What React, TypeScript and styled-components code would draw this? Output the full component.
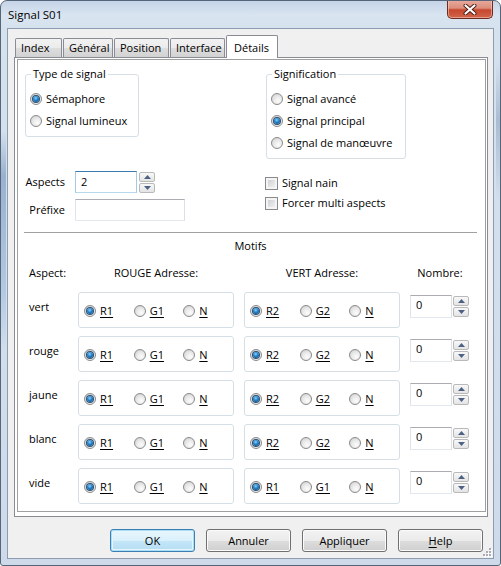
import React from 'react';
import styled, { createGlobalStyle } from 'styled-components';

// Dialog data
const tabs = [
  { label: 'Index', width: 47 },
  { label: 'Général', width: 50 },
  { label: 'Position', width: 55 },
  { label: 'Interface', width: 55 },
  { label: 'Détails', width: 52, active: true },
];

const motifRows = [
  { label: 'vert', rouge: ['R1', 'G1', 'N'], vert: ['R2', 'G2', 'N'] },
  { label: 'rouge', rouge: ['R1', 'G1', 'N'], vert: ['R2', 'G2', 'N'] },
  { label: 'jaune', rouge: ['R1', 'G1', 'N'], vert: ['R2', 'G2', 'N'] },
  { label: 'blanc', rouge: ['R1', 'G1', 'N'], vert: ['R2', 'G2', 'N'] },
  { label: 'vide', rouge: ['R1', 'G1', 'N'], vert: ['R1', 'G1', 'N'] },
];

const GlobalStyle = createGlobalStyle`
  html, body {
    margin: 0;
    padding: 0;
    background: #ffffff;
  }
  body {
    font-family: "Open Sans", "Liberation Sans", sans-serif;
    font-size: 11px;
    color: #000;
  }
  * {
    box-sizing: border-box;
  }
`;

const Window = styled.div`
  width: 501px;
  height: 566px;
  border: 1px solid #56667a;
  border-radius: 7px 7px 3px 3px;
  padding: 0 6px 6px;
  display: flex;
  flex-direction: column;
  overflow: hidden;
  background:
    linear-gradient(180deg, transparent 130px, rgba(80, 120, 170, 0.45) 175px, rgba(120, 160, 205, 0.35) 290px, transparent 350px) left top / 5px 100% no-repeat,
    linear-gradient(180deg, transparent 60px, rgba(90, 120, 160, 0.35) 120px, transparent 200px) right top / 4px 100% no-repeat,
    linear-gradient(180deg, #c5d4e7 0px, #d9e4f1 14px, #d6e1ee 30px, #d2deec 60%, #cedaea 100%);
`;

const TitleBar = styled.div`
  height: 27px;
  display: flex;
  align-items: flex-start;
  justify-content: space-between;
`;

const Title = styled.span`
  margin: 6px 0 0 1px;
  font-size: 11.5px;
  line-height: 15px;
`;

const CloseButton = styled.div`
  width: 46px;
  height: 19px;
  margin: -1px 1px 0 0;
  border: 1px solid #6d2a1e;
  border-top: none;
  border-radius: 0 0 5px 5px;
  background: linear-gradient(180deg, #e9ab9d 0%, #dc8e7c 45%, #c7472d 55%, #d0654b 100%);
  box-shadow: inset 0 0 0 1px rgba(255, 215, 205, 0.5);
  display: flex;
  align-items: center;
  justify-content: center;
`;

const Client = styled.div`
  position: relative;
  flex: 1;
  border: 1px solid #8c9db2;
  background: #f0f0f0;
  padding: 6px 5px 6px 6px;
  display: flex;
  flex-direction: column;
`;

const TabStrip = styled.div`
  position: relative;
  z-index: 1;
  height: 22px;
  padding-left: 1px;
  display: flex;
  align-items: flex-start;
`;

const Tab = styled.div<{ $active?: boolean; $w: number }>`
  width: ${({ $w }) => $w}px;
  height: ${({ $active }) => ($active ? 23 : 19)}px;
  margin-top: ${({ $active }) => ($active ? 0 : 3)}px;
  margin-right: 1px;
  padding: ${({ $active }) => ($active ? '4px 0 0 7px' : '1px 0 0 5px')};
  border: 1px solid #898c95;
  border-bottom: none;
  border-radius: 2px 2px 0 0;
  line-height: 15px;
  white-space: nowrap;
  background: ${({ $active }) =>
    $active ? '#ffffff' : 'linear-gradient(180deg, #f2f2f2 0%, #ebebeb 50%, #dedede 51%, #d2d2d2 100%)'};
`;

const Sheet = styled.div`
  height: 460px;
  border: 1px solid #898c95;
  background: #ffffff;
  padding: 1px 1px 4px 2px;
  display: flex;
`;

const Panel = styled.div`
  flex: 1;
  border: 1px solid #a0a0a0;
  background: #ffffff;
  display: flex;
  flex-direction: column;
`;

const TopArea = styled.div`
  display: flex;
  padding-top: 14px;
`;

const LeftCol = styled.div`
  width: 248px;
  display: flex;
  flex-direction: column;
`;

const RightCol = styled.div`
  display: flex;
  flex-direction: column;
`;

const GroupBox = styled.div<{ $w: number; $ml?: number }>`
  position: relative;
  width: ${({ $w }) => $w}px;
  margin-left: ${({ $ml }) => $ml ?? 0}px;
  border: 1px solid #d5dfe5;
  border-radius: 3px;
  padding: 13px 4px 4px;
`;

const Legend = styled.span`
  position: absolute;
  top: -9px;
  left: 5px;
  padding: 0 2px;
  background: #ffffff;
  line-height: 15px;
`;

const RadioOption = styled.div<{ $w?: number }>`
  display: flex;
  align-items: center;
  gap: 4px;
  height: 22px;
  width: ${({ $w }) => ($w ? `${$w}px` : 'auto')};
  white-space: nowrap;
`;

const RadioText = styled.span`
  margin-top: -1px;
`;

const RadioCircle = styled.span<{ $on?: boolean }>`
  flex: none;
  width: 12px;
  height: 12px;
  border-radius: 50%;
  border: 1px solid #8a8a8a;
  background: radial-gradient(circle at 62% 68%, #fcfcfc 0%, #eaeaea 45%, #c9c9c9 100%);
  display: flex;
  align-items: center;
  justify-content: center;

  &::after {
    content: '';
    display: ${({ $on }) => ($on ? 'block' : 'none')};
    width: 6px;
    height: 6px;
    border-radius: 50%;
    background: radial-gradient(circle at 45% 35%, #8fd0fa 0%, #1f80c9 45%, #0a3b6e 100%);
    box-shadow: 0 0 0 1px #2b4f73;
  }
`;

const Hotkey = styled.span`
  text-decoration: underline;
  text-underline-offset: 2px;
`;

const FormGrid = styled.div`
  margin-top: 34px;
  display: grid;
  grid-template-columns: 47px auto;
  column-gap: 10px;
  row-gap: 6px;
  align-items: center;
`;

const FieldLabel = styled.span`
  text-align: right;
  line-height: 15px;
  margin-top: -1px;
`;

const FieldRow = styled.div`
  display: flex;
  align-items: flex-start;
  gap: 2px;
`;

const TextBox = styled.div<{ $w: number; $h?: number; $focus?: boolean; $top?: number }>`
  width: ${({ $w }) => $w}px;
  height: ${({ $h }) => $h ?? 22}px;
  padding: ${({ $top }) => $top ?? 2}px 5px 0;
  line-height: 15px;
  background: #ffffff;
  border: 1px solid;
  border-color: ${({ $focus }) =>
    $focus ? '#3d7bad #a4c9e3 #b7d9ed #a4c9e3' : '#abadb3 #dbdfe6 #e3e9ef #e2e3ea'};
`;

const Spin = styled.div<{ $mt?: number }>`
  margin-top: ${({ $mt }) => $mt ?? 1}px;
  display: flex;
  flex-direction: column;
  gap: 1px;
`;

const SpinHalf = styled.div`
  width: 16px;
  height: 10px;
  border: 1px solid #b9b9b9;
  border-radius: 2px;
  background: linear-gradient(180deg, #f8f8f8 0%, #e4e4e4 100%);
  display: flex;
  align-items: center;
  justify-content: center;
`;

const CheckList = styled.div`
  margin: 14px 0 0 -1px;
  display: flex;
  flex-direction: column;
`;

const CheckRow = styled.div`
  display: flex;
  align-items: center;
  gap: 4px;
  height: 20px;
`;

const CheckBox = styled.span`
  width: 13px;
  height: 13px;
  border: 1px solid #8a8a8a;
  background: linear-gradient(135deg, #c4c7cc 0%, #e4e5e7 60%, #f5f5f5 100%);
  box-shadow: inset 0 0 0 2px #f4f4f4;
`;

const Separator = styled.div`
  height: 1px;
  margin: 11px 8px 0 6px;
  background: #a0a0a0;
`;

const SectionTitle = styled.div`
  margin-top: 5px;
  padding-right: 2px;
  text-align: center;
  line-height: 15px;
`;

const MotifGrid = styled.div<{ $mt: number }>`
  margin-top: ${({ $mt }) => $mt}px;
  padding-left: 11px;
  display: grid;
  grid-template-columns: 39px 156px 156px 60px;
  column-gap: 10px;
  row-gap: 8px;
`;

const HeadCell = styled.span<{ $center?: boolean }>`
  line-height: 15px;
  white-space: nowrap;
  text-align: ${({ $center }) => ($center ? 'center' : 'left')};
`;

const RowLabel = styled.span`
  padding-top: 7px;
  line-height: 15px;
`;

const RadioFrame = styled.div`
  height: 36px;
  border: 1px solid #d5dfe5;
  border-radius: 3px;
  padding: 2px 0 0 5px;
  display: flex;
  align-items: center;
`;

const SpinField = styled.div`
  margin-top: 3px;
  display: flex;
  align-items: flex-start;
  gap: 1px;
`;

const ButtonBar = styled.div`
  margin-top: 12px;
  padding-right: 5px;
  display: flex;
  justify-content: flex-end;
  gap: 11px;
`;

const DialogButton = styled.div<{ $default?: boolean }>`
  width: 85px;
  height: 23px;
  padding-bottom: 1px;
  border: 1px solid ${({ $default }) => ($default ? '#3c7fb1' : '#707070')};
  border-radius: 3px;
  display: flex;
  align-items: center;
  justify-content: center;
  line-height: 15px;
  background: ${({ $default }) =>
    $default
      ? 'linear-gradient(180deg, #eaf6fd 0%, #d9f0fc 50%, #c4e6f8 51%, #b5ddf2 100%)'
      : 'linear-gradient(180deg, #f2f2f2 0%, #ebebeb 50%, #dddddd 51%, #cfcfcf 100%)'};
  box-shadow: ${({ $default }) =>
    $default ? 'inset 0 0 0 1px #a9def8, inset 0 0 0 2px #e6f5fd' : 'inset 0 0 0 1px #fbfbfb'};
`;

const Grip = styled.svg`
  position: absolute;
  right: 1px;
  bottom: 1px;
`;

const Arrow: React.FC<{ up?: boolean }> = ({ up }) => (
  <svg width="7" height="4" viewBox="0 0 7 4">
    <path d={up ? 'M0 4 L3.5 0 L7 4 Z' : 'M0 0 L7 0 L3.5 4 Z'} fill="#4d6185" />
  </svg>
);

const SpinButtons: React.FC<{ mt?: number }> = ({ mt }) => (
  <Spin $mt={mt}>
    <SpinHalf>
      <Arrow up />
    </SpinHalf>
    <SpinHalf>
      <Arrow />
    </SpinHalf>
  </Spin>
);

const Radio: React.FC<{ label: React.ReactNode; on?: boolean; w?: number }> = ({ label, on, w }) => (
  <RadioOption $w={w}>
    <RadioCircle $on={on} />
    <RadioText>{label}</RadioText>
  </RadioOption>
);

const RadioTriple: React.FC<{ items: string[] }> = ({ items }) => (
  <RadioFrame>
    {items.map((item, i) => (
      <Radio key={item} w={50} on={i === 0} label={<Hotkey>{item}</Hotkey>} />
    ))}
  </RadioFrame>
);

const App: React.FC = () => {
  return (
    <>
      <GlobalStyle />
      <Window>
        <TitleBar>
          <Title>Signal S01</Title>
          <CloseButton>
            <svg width="14" height="11" viewBox="0 0 14 11">
              <path d="M2.5 1.5 L11.5 9.5 M11.5 1.5 L2.5 9.5" stroke="#4a1c14" strokeWidth="4" strokeLinecap="round" />
              <path d="M2.5 1.5 L11.5 9.5 M11.5 1.5 L2.5 9.5" stroke="#ffffff" strokeWidth="2.2" strokeLinecap="round" />
            </svg>
          </CloseButton>
        </TitleBar>

        <Client>
          <TabStrip>
            {tabs.map(tab => (
              <Tab key={tab.label} $w={tab.width} $active={tab.active}>
                {tab.label}
              </Tab>
            ))}
          </TabStrip>

          <Sheet>
            <Panel>
              <TopArea>
                <LeftCol>
                  <GroupBox $w={114} $ml={7}>
                    <Legend>Type de signal</Legend>
                    <Radio label="Sémaphore" on />
                    <Radio label="Signal lumineux" />
                  </GroupBox>

                  <FormGrid>
                    <FieldLabel>Aspects</FieldLabel>
                    <FieldRow>
                      <TextBox $w={62} $focus>2</TextBox>
                      <SpinButtons />
                    </FieldRow>
                    <FieldLabel>Préfixe</FieldLabel>
                    <FieldRow>
                      <TextBox $w={110} />
                    </FieldRow>
                  </FormGrid>
                </LeftCol>

                <RightCol>
                  <GroupBox $w={140}>
                    <Legend>Signification</Legend>
                    <Radio label="Signal avancé" />
                    <Radio label="Signal principal" on />
                    <Radio label="Signal de manœuvre" />
                  </GroupBox>

                  <CheckList>
                    <CheckRow>
                      <CheckBox />
                      <RadioText>Signal nain</RadioText>
                    </CheckRow>
                    <CheckRow>
                      <CheckBox />
                      <RadioText>Forcer multi aspects</RadioText>
                    </CheckRow>
                  </CheckList>
                </RightCol>
              </TopArea>

              <Separator />
              <SectionTitle>Motifs</SectionTitle>

              <MotifGrid $mt={12}>
                <HeadCell>Aspect:</HeadCell>
                <HeadCell $center>ROUGE Adresse:</HeadCell>
                <HeadCell $center>VERT Adresse:</HeadCell>
                <HeadCell $center>Nombre:</HeadCell>
              </MotifGrid>

              <MotifGrid $mt={12}>
                {motifRows.map(row => (
                  <React.Fragment key={row.label}>
                    <RowLabel>{row.label}</RowLabel>
                    <RadioTriple items={row.rouge} />
                    <RadioTriple items={row.vert} />
                    <SpinField>
                      <TextBox $w={42} $h={23} $top={1}>0</TextBox>
                      <SpinButtons mt={1} />
                    </SpinField>
                  </React.Fragment>
                ))}
              </MotifGrid>
            </Panel>
          </Sheet>

          <ButtonBar>
            <DialogButton $default>OK</DialogButton>
            <DialogButton>Annuler</DialogButton>
            <DialogButton>Appliquer</DialogButton>
            <DialogButton>
              <span>
                <Hotkey>H</Hotkey>elp
              </span>
            </DialogButton>
          </ButtonBar>

          <Grip width="9" height="9" viewBox="0 0 9 9">
            {[
              [6, 0],
              [6, 3],
              [3, 3],
              [6, 6],
              [3, 6],
              [0, 6],
            ].map(([x, y]) => (
              <React.Fragment key={`${x}-${y}`}>
                <rect x={x + 1} y={y + 1} width="2" height="2" fill="#ffffff" />
                <rect x={x} y={y} width="2" height="2" fill="#a9acb2" />
              </React.Fragment>
            ))}
          </Grip>
        </Client>
      </Window>
    </>
  );
};

export default App;
